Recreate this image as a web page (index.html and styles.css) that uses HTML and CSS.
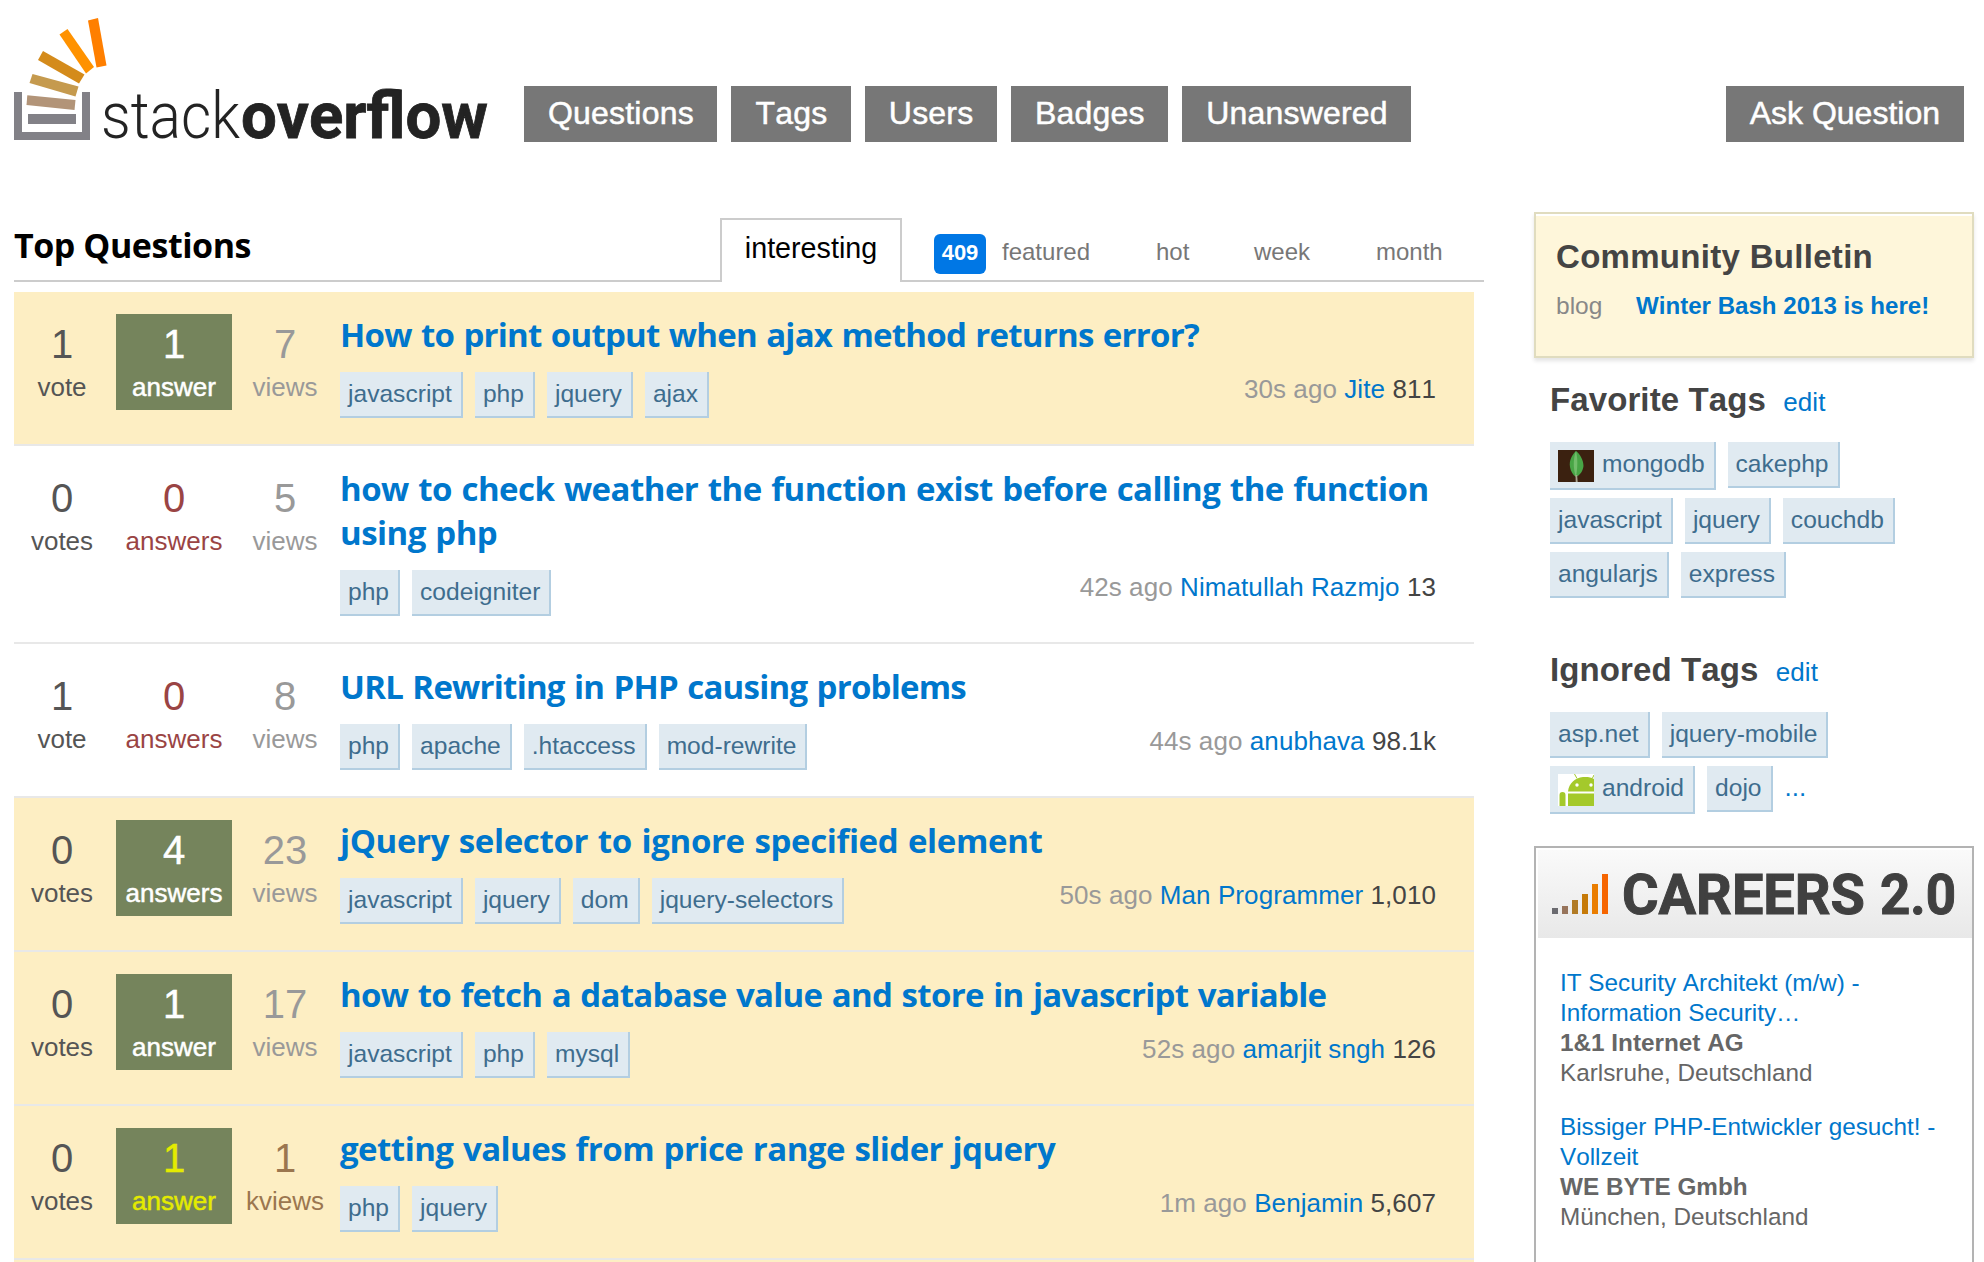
FILE: index.html
```html
<!DOCTYPE html>
<html lang="en">
<head>
<meta charset="utf-8">
<title>Stack Overflow</title>
<link rel="stylesheet" href="styles.css">
</head>
<body>
<header class="header">
  <svg class="logo" width="500" height="150" viewBox="0 0 500 150" role="img" aria-label="stackoverflow">
    <path d="M14 92h8v40h60V92h8v48H14z" fill="#828187"/>
    <path d="M28 114h48v10H28z" fill="#828187"/>
    <path d="M27.3 95.3 75.5 100l-1 10-48-5z" fill="#b29478"/>
    <path d="M32.5 74 78.5 86.5 75.5 96.5 29.5 83z" fill="#c59a4e"/>
    <path d="M43 51 84.5 74.5 79 83.5 38 60z" fill="#d48b1b"/>
    <path d="M67.5 29 94 67 86 73.5 59.5 34.5z" fill="#ff9200"/>
    <path d="M98 18 106.5 65.5 96.5 67.5 88 20.5z" fill="#ff7f00"/>
    <text class="logo-light" x="101" y="138" textLength="139" lengthAdjust="spacingAndGlyphs">stack</text>
    <text class="logo-bold" x="241" y="138" textLength="247" lengthAdjust="spacingAndGlyphs">overflow</text>
  </svg>
  <nav class="nav nav-main">
    <a>Questions</a><a>Tags</a><a>Users</a><a>Badges</a><a>Unanswered</a>
  </nav>
  <nav class="nav nav-ask"><a>Ask Question</a></nav>
</header>
<div class="content">
<main class="main">
  <div class="subheader">
    <h1>Top Questions</h1>
    <div class="tabs">
      <a class="tab-active">interesting</a>
      <a class="featured"><span class="badge">409</span>featured</a>
      <a class="hot">hot</a><a class="week">week</a><a class="month">month</a>
    </div>
  </div>

  <div class="row tagged">
    <div class="stat votes"><b>1</b><span>vote</span></div>
    <div class="stat answers answered"><b>1</b><span>answer</span></div>
    <div class="stat views"><b>7</b><span>views</span></div>
    <div class="summary">
      <h3 class="snug"><a>How to print output when ajax method returns error?</a></h3>
      <div class="details"><div class="tags"><a>javascript</a><a>php</a><a>jquery</a><a>ajax</a></div>
      <div class="started">30s ago <a>Jite</a> <span>811</span></div></div>
    </div>
  </div>
  <div class="row tall">
    <div class="stat votes"><b>0</b><span>votes</span></div>
    <div class="stat answers unanswered"><b>0</b><span>answers</span></div>
    <div class="stat views"><b>5</b><span>views</span></div>
    <div class="summary">
      <h3><a>how to check weather the function exist before calling the function<br>using php</a></h3>
      <div class="details"><div class="tags"><a>php</a><a>codeigniter</a></div>
      <div class="started">42s ago <a>Nimatullah Razmjo</a> <span>13</span></div></div>
    </div>
  </div>
  <div class="row">
    <div class="stat votes"><b>1</b><span>vote</span></div>
    <div class="stat answers unanswered"><b>0</b><span>answers</span></div>
    <div class="stat views"><b>8</b><span>views</span></div>
    <div class="summary">
      <h3 class="snug"><a>URL Rewriting in PHP causing problems</a></h3>
      <div class="details"><div class="tags"><a>php</a><a>apache</a><a>.htaccess</a><a>mod-rewrite</a></div>
      <div class="started">44s ago <a>anubhava</a> <span>98.1k</span></div></div>
    </div>
  </div>
  <div class="row tagged">
    <div class="stat votes"><b>0</b><span>votes</span></div>
    <div class="stat answers answered"><b>4</b><span>answers</span></div>
    <div class="stat views"><b>23</b><span>views</span></div>
    <div class="summary">
      <h3 class="loose"><a>jQuery selector to ignore specified element</a></h3>
      <div class="details"><div class="tags"><a>javascript</a><a>jquery</a><a>dom</a><a>jquery-selectors</a></div>
      <div class="started">50s ago <a>Man Programmer</a> <span>1,010</span></div></div>
    </div>
  </div>
  <div class="row tagged">
    <div class="stat votes"><b>0</b><span>votes</span></div>
    <div class="stat answers answered"><b>1</b><span>answer</span></div>
    <div class="stat views"><b>17</b><span>views</span></div>
    <div class="summary">
      <h3 class="close"><a>how to fetch a database value and store in javascript variable</a></h3>
      <div class="details"><div class="tags"><a>javascript</a><a>php</a><a>mysql</a></div>
      <div class="started">52s ago <a>amarjit sngh</a> <span>126</span></div></div>
    </div>
  </div>
  <div class="row tagged">
    <div class="stat votes"><b>0</b><span>votes</span></div>
    <div class="stat answers answered accepted"><b>1</b><span>answer</span></div>
    <div class="stat views warm"><b>1</b><span>kviews</span></div>
    <div class="summary">
      <h3><a>getting values from price range slider jquery</a></h3>
      <div class="details"><div class="tags"><a>php</a><a>jquery</a></div>
      <div class="started">1m ago <a>Benjamin</a> <span>5,607</span></div></div>
    </div>
  </div>
  <div class="row tagged last"></div>
</main>
<aside class="sidebar">
  <section class="bulletin">
    <h4>Community Bulletin</h4>
    <p><span>blog</span><a>Winter Bash 2013 is here!</a></p>
  </section>
  <section class="tagbox">
    <h4>Favorite Tags <a>edit</a></h4>
    <div class="tags"><a class="with-icon"><svg width="36" height="32" viewBox="0 0 36 32"><path fill="#3b2110" d="M0 0h36v32H0z"/><path fill="#48a546" d="M18 1c-4 4-7 9-6 16 .5 4 3 8 6 10 4-2 7-6 7.500-11C25.500 10 22 4 18 1z"/><path fill="#72bd6b" d="M18 1c-3 8-3 18 0 26 1.500-8 2-18 0-26z"/><path fill="#a9a38f" d="M17.500 25h1.600l.6 7h-2z"/></svg>mongodb</a><a>cakephp</a></div>
    <div class="tags"><a>javascript</a><a>jquery</a><a>couchdb</a></div>
    <div class="tags"><a>angularjs</a><a>express</a></div>
  </section>
  <section class="tagbox ignored">
    <h4>Ignored Tags <a>edit</a></h4>
    <div class="tags"><a>asp.net</a><a>jquery-mobile</a></div>
    <div class="tags"><a class="with-icon"><svg width="36" height="32" viewBox="0 0 36 32"><path fill="#fff" d="M0 0h36v32H0z"/><path fill="#a4c92b" d="M10 17.500C11 9 17 4 25 3c4-.3 8 0 11 2v12.500zM10 19.500h26V32H10zM1.500 21a3 3 0 0 1 6 0v11h-6z"/><path stroke="#a4c92b" d="m16.500 0 2.500 4.500M36 1l-1.500 3"/><circle cx="19" cy="11" r="1.700" fill="#fff"/><circle cx="33" cy="11" r="1.700" fill="#fff"/></svg>android</a><a>dojo</a><span class="more">...</span></div>
  </section>
  <section class="careers">
    <svg class="banner" width="434" height="88" viewBox="0 0 434 88" role="img" aria-label="Careers 2.0">
      <defs><linearGradient id="shade" x2="0" y2="1"><stop stop-color="#fafafa"/><stop offset="1" stop-color="#e8e8e8"/></linearGradient></defs>
      <path fill="url(#shade)" d="M0 0h434v88H0z"/>
      <path fill="#6b6b70" d="M14 58h6v6h-6z"/><path fill="#97745b" d="M24 56h6v8h-6z"/><path fill="#b17b25" d="M34 50h6v14h-6z"/><path fill="#c67a08" d="M44 44h6v20h-6z"/><path fill="#ea7d00" d="M54 34h6v30h-6z"/><path fill="#f66500" d="M64 24h6v40h-6z"/>
      <text x="84" y="64" textLength="243" lengthAdjust="spacingAndGlyphs">CAREERS</text>
      <text x="342" y="64" textLength="76" lengthAdjust="spacingAndGlyphs">2.0</text>
    </svg>
    <div class="job"><a>IT Security Architekt (m/w) -<br>Information Security…</a><b>1&amp;1 Internet AG</b><span>Karlsruhe, Deutschland</span></div>
    <div class="job"><a>Bissiger PHP-Entwickler gesucht! -<br>Vollzeit</a><b>WE BYTE Gmbh</b><span>München, Deutschland</span></div>
  </section>
</aside>
</div>
</body>
</html>
```
FILE: styles.css
```css
* { box-sizing: border-box; }
body {
  margin: 0;
  height: 1262px;
  overflow: hidden;
  background: #fff;
  color: #444;
  font-family: "Liberation Sans", Arial, sans-serif;
  font-kerning: none;
}
h1, h3, h4, p { margin: 0; }

.header { display: flex; align-items: flex-start; height: 212px; padding-right: 20px; }
.logo { flex: none; margin-right: 24px; }
.logo text { fill: #232323; font-family: Roboto, sans-serif; font-size: 64px; }
.logo .logo-light { font-weight: 300; }
.logo .logo-bold { font-weight: 700; stroke: #232323; stroke-width: .8px; }
.nav { display: flex; gap: 14px; margin-top: 86px; }
.nav a {
  height: 56px;
  padding: 0 24px;
  background: #777;
  color: #fff;
  font-size: 32px;
  line-height: 54px;
  -webkit-text-stroke: .5px #fff;
}
.nav-main a { padding-right: 23.500px; letter-spacing: .2px; }
.nav-ask { margin-left: auto; }

.content { display: flex; gap: 50px; height: 1050px; padding-left: 14px; overflow: hidden; }
.main { width: 1470px; }
.subheader {
  display: flex;
  justify-content: space-between;
  height: 70px;
  margin-bottom: 10px;
  border-bottom: 2px solid #ccc;
}
.subheader h1 {
  color: #000;
  font: 700 34px/66px "Open Sans", sans-serif;
  letter-spacing: -.45px;
}
.tabs { display: flex; padding-top: 6px; color: #777; font-size: 24px; line-height: 80px; }
.tab-active {
  width: 182px;
  height: 64px;
  margin-right: 32px;
  border: 2px solid #ccc;
  border-bottom: 0;
  background: #fff;
  color: #000;
  font-size: 28.700px;
  line-height: 56px;
  text-align: center;
}
.featured { display: flex; width: 222px; line-height: 68px; }
.badge {
  width: 52px;
  height: 40px;
  margin: 16px 16px 0 0;
  border-radius: 6px;
  background: #0077e5;
  color: #fff;
  font-size: 22px;
  font-weight: 700;
  line-height: 37px;
  text-align: center;
}
.tabs .hot, .tabs .week, .tabs .month { line-height: 68px; }
.hot { width: 98px; }
.week { width: 122px; }
.month { width: 108px; }

.row {
  display: flex;
  width: 1460px;
  height: 154px;
  padding: 22px 38px 0 0;
  border-bottom: 2px solid #e8e8e8;
}
.row.tall { height: 198px; }
.row.last { height: 2px; padding: 0; border: 0; }
.tagged { background: #fdeec3; }
.stat { display: flex; flex: none; flex-direction: column; height: 96px; text-align: center; }
.stat b { font-size: 40px; font-weight: 400; line-height: 60px; }
.stat span { font-size: 26px; line-height: 26px; }
.votes { width: 96px; margin-right: 6px; color: #555; }
.answers { width: 116px; }
.views { width: 106px; margin-right: 2px; color: #999; }
.warm { color: #9b764f; }
.unanswered { color: #9a4444; }
.answered { background: #75845c; color: #fff; -webkit-text-stroke: .5px currentColor; }
.accepted { color: #e4eb00; }
.summary { flex: 1; margin-top: -1px; }
.summary h3 {
  color: #07c;
  font: 700 33px/44px "Open Sans", sans-serif;
  letter-spacing: -.54px;
  word-spacing: 1.500px;
  white-space: nowrap;
}
.summary .snug { letter-spacing: -.77px; }
.summary .close { letter-spacing: -.69px; }
.summary .loose { letter-spacing: -.36px; }
.details { display: flex; justify-content: space-between; margin-top: 15px; }
.started { color: #999; font-size: 26px; letter-spacing: .08px; line-height: 34px; }
.started a { color: #07c; }
.started span { color: #444; }

.tags { display: flex; align-items: flex-start; gap: 12px; }
.tags a {
  height: 46px;
  padding: 0 9px 0 8px;
  border-right: 2px solid #b3cee1;
  border-bottom: 2px solid #b3cee1;
  background: #e0eaf1;
  color: #3e6d8e;
  font-size: 24.600px;
  line-height: 43px;
}
.tags .with-icon { display: flex; height: 48px; }
.with-icon svg { margin: 8px 8px 0 0; }

.sidebar { width: 440px; }
.sidebar h4 { font-size: 33px; font-weight: 700; }
.bulletin {
  height: 146px;
  padding: 24px 20px 0;
  border: 2px solid #e0dcbf;
  background: #fef6da;
  box-shadow: inset 0 2px #fff, 0 3px 4px #e4e4e4;
}
.bulletin h4 { line-height: 38px; letter-spacing: .3px; }
.bulletin p { display: flex; padding-top: 16px; font-size: 24.500px; line-height: 28px; }
.bulletin span { width: 80px; color: #888; }
.bulletin a { color: #07c; font-size: 24.100px; font-weight: 700; }
.tagbox { padding: 22px 0 0 16px; }
.tagbox h4 { height: 62px; padding-top: 10px; line-height: 20px; letter-spacing: .1px; }
.tagbox h4 a { margin-left: 8px; color: #07c; font-size: 26px; font-weight: 400; }
.tagbox .tags { margin-bottom: 8px; }
.tagbox.ignored { padding-top: 44px; }
.more { color: #07c; font-size: 26px; line-height: 42px; }
.careers {
  height: 460px;
  margin-top: 32px;
  padding: 2px 0 0 2px;
  border: 2px solid #b3b3b3;
}
.banner { display: block; margin-bottom: 30px; }
.banner text {
  fill: #404040;
  stroke: #404040;
  stroke-width: 1px;
  font: 700 56px Roboto, sans-serif;
}
.job {
  display: flex;
  flex-direction: column;
  padding-left: 22px;
  margin-bottom: 24px;
  color: #666;
  font-size: 24.300px;
  line-height: 30px;
}
.job a { color: #07c; }
```
